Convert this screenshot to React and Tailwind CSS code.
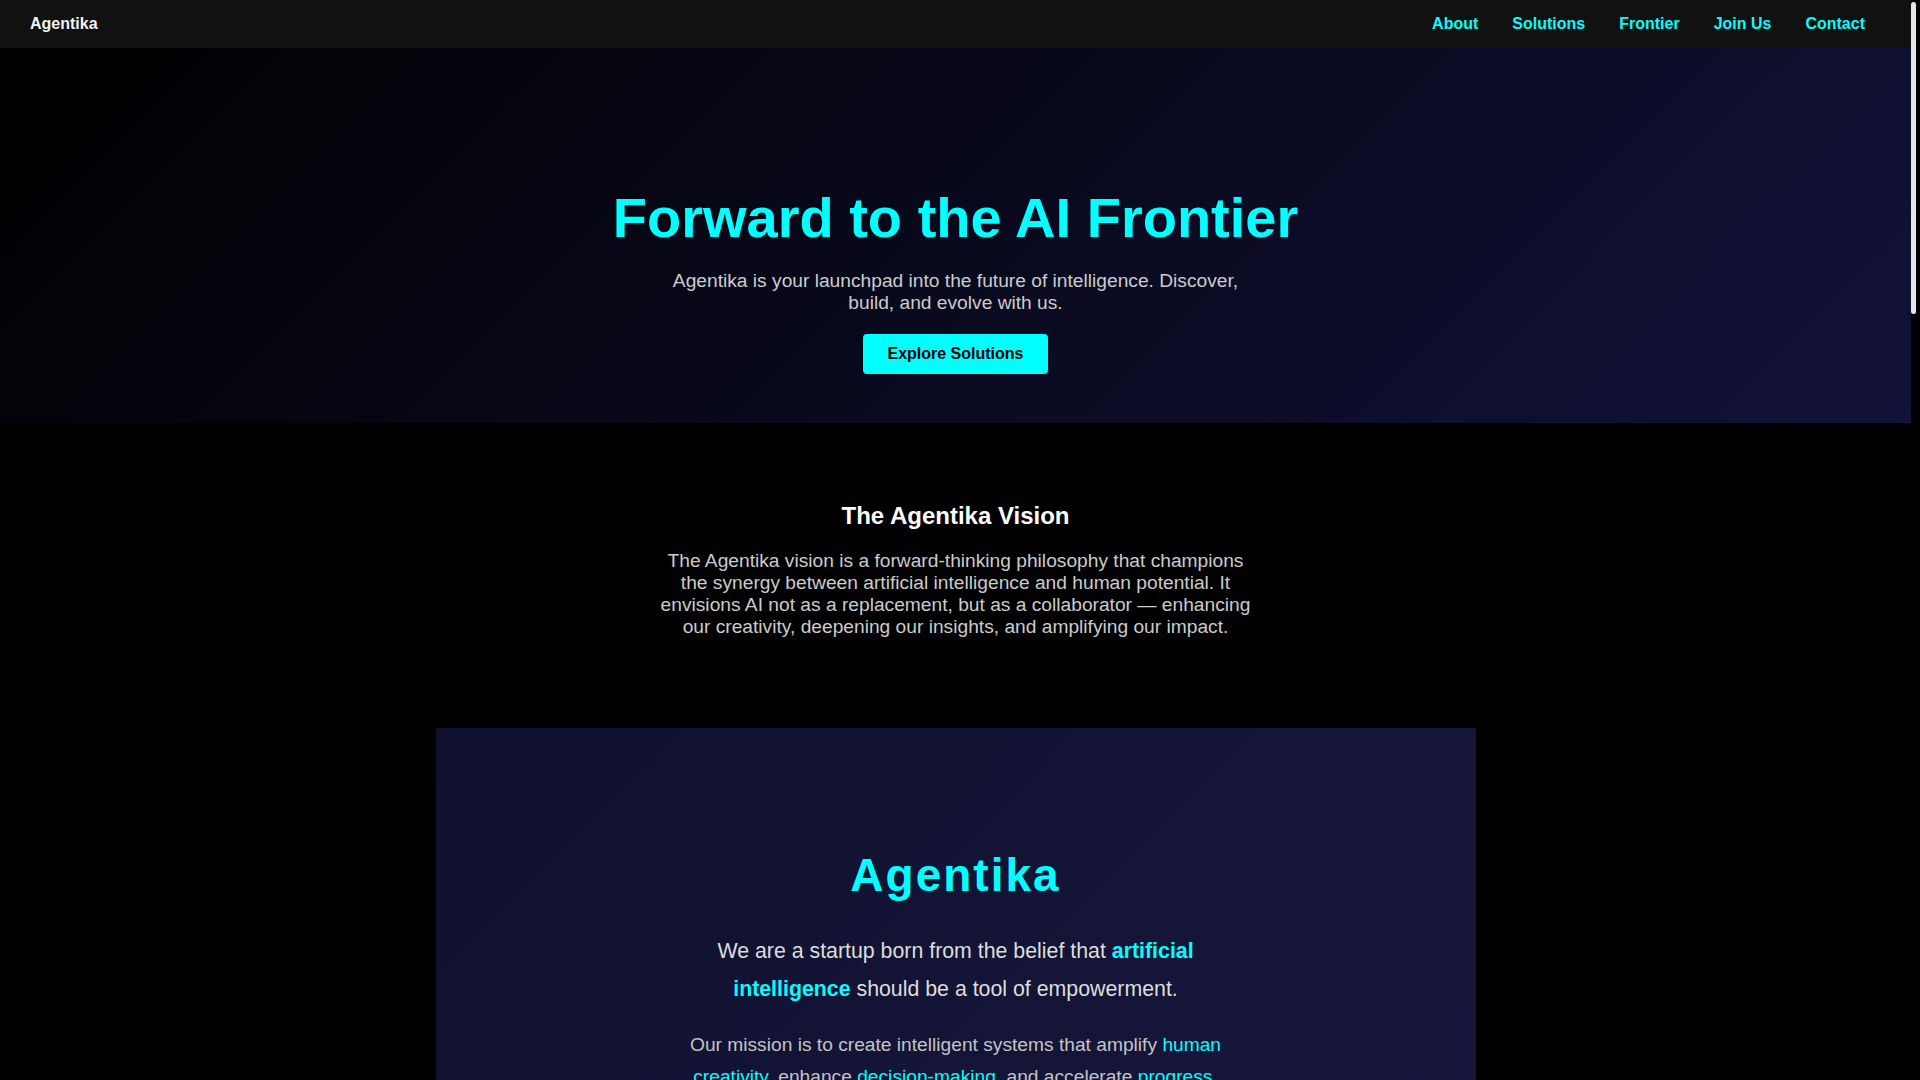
import React from 'react';

const LINKS = ['About', 'Solutions', 'Frontier', 'Join Us', 'Contact'];

function Nav() {
  return (
    <nav className="flex h-12 items-center justify-between bg-[#111111] pl-[30px] pr-[46px]">
      <span className="text-base font-bold text-[#f2f2f2]">Agentika</span>
      <ul className="flex items-center gap-[34px]">
        {LINKS.map((label) => (
          <li key={label}>
            <a href="#" className="text-base font-bold text-[#00ffff]">{label}</a>
          </li>
        ))}
      </ul>
    </nav>
  );
}

function Hero() {
  return (
    <section className="bg-[linear-gradient(135deg,#000000,#12123a)] px-8 pt-[138px] pb-[49px] text-center">
      <h1 className="text-[56px] font-bold leading-[1.15] text-[#00ffff]">Forward to the AI Frontier</h1>
      <p className="mx-auto mt-[20px] max-w-[600px] text-[19.2px] leading-[1.15] text-[#cccccc]">
        Agentika is your launchpad into the future of intelligence. Discover, build, and evolve with us.
      </p>
      <button
        type="button"
        className="mt-[19px] rounded bg-[#00ffff] px-6 py-[11px] text-base font-bold leading-[1.15] text-black"
      >
        Explore Solutions
      </button>
    </section>
  );
}

function Vision() {
  return (
    <section className="bg-black px-8 pt-[79px] pb-[90px] text-center">
      <h2 className="text-2xl font-bold leading-[1.15] text-white">The Agentika Vision</h2>
      <p className="mx-auto mt-[20px] max-w-[600px] text-[19.2px] leading-[1.15] text-[#cccccc]">
        The Agentika vision is a forward-thinking philosophy that champions the synergy between artificial
        intelligence and human potential. It envisions AI not as a replacement, but as a collaborator — enhancing
        our creativity, deepening our insights, and amplifying our impact.
      </p>
    </section>
  );
}

function About() {
  return (
    <section className="bg-black pb-20">
      <div className="mx-auto w-[1040px] bg-[linear-gradient(135deg,#0f102d,#18183f)] px-10 pt-[121px] pb-[120px] text-center">
        <h2 className="text-[46px] font-bold leading-[1.15] tracking-[2px] text-[#00ffff]">Agentika</h2>
        <p className="mx-auto mt-[30px] max-w-[560px] text-[21.33px] leading-[1.8] text-[#dddddd]">
          We are a startup born from the belief that{' '}
          <strong className="font-bold text-[#00ffff]">artificial intelligence</strong> should be a tool of
          empowerment.
        </p>
        <p className="mx-auto mt-[20px] max-w-[560px] text-[19.2px] leading-[1.7] text-[#c4c4c4]">
          Our mission is to create intelligent systems that amplify{' '}
          <span className="text-[#00ffff]">human creativity</span>, enhance{' '}
          <span className="text-[#00ffff]">decision-making</span>, and accelerate{' '}
          <span className="text-[#00ffff]">progress</span>.
        </p>
        <p className="mx-auto mt-[20px] max-w-[560px] text-[19.2px] leading-[1.7] text-[#c4c4c4]">
          We build tools that work alongside people, not in place of them.
        </p>
      </div>
    </section>
  );
}

// the reference shows the browser's scrollbar along the right edge
function ScrollTrack() {
  return (
    <div className="fixed top-0 right-0 h-screen w-[9px] bg-black" aria-hidden="true">
      <div className="mt-[2px] h-[312px] w-[5px] rounded-full bg-[#e6e6e6]" />
    </div>
  );
}

export default function App() {
  return (
    <div className="min-h-screen bg-black font-['Liberation_Sans',Arial,sans-serif]">
      <div className="mr-[9px]">
        <Nav />
        <Hero />
        <Vision />
        <About />
      </div>
      <ScrollTrack />
    </div>
  );
}
